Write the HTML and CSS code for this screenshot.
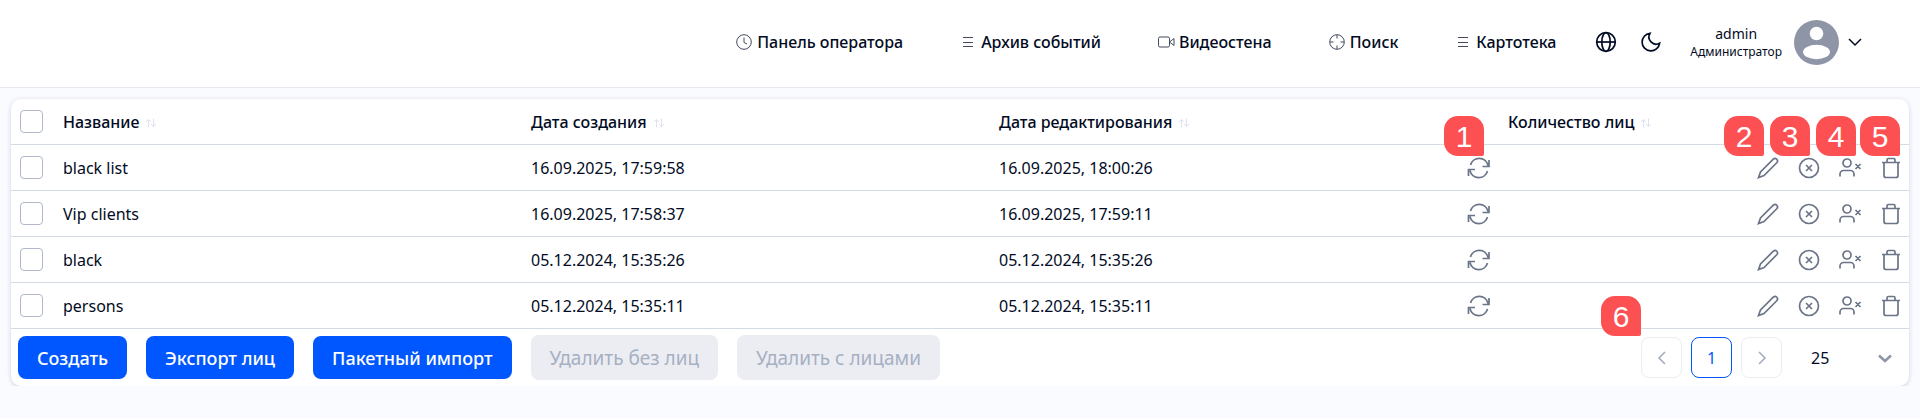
FILE: index.html
```html
<!DOCTYPE html>
<html lang="ru">
<head>
    <meta charset="UTF-8">
    <meta name="viewport" content="width=device-width, initial-scale=1.0">
    <title>Картотека</title>
    <link rel="stylesheet" href="styles.css">
</head>
<body>

    <!-- Shared icons -->
    <svg class="sprite" aria-hidden="true">
        <symbol id="i-list" viewBox="0 0 18 18"><path d="M4 4.500h10M4 9.500h10M4 13.500h10"/></symbol>
        <symbol id="i-sort" viewBox="0 0 12 10"><path d="M3.500 9.500v-8M1 4l2.500-2.500L6 4M8.500 .5v8M6 6l2.500 2.500L11 6"/></symbol>
        <symbol id="i-refresh" viewBox="0 0 24 24"><path d="M22 4v6.500h-6.500M1.500 20v-6.500H8M3.500 9A9 9 0 0 1 21 9.500M20.500 15A9 9 0 0 1 3 14.500"/></symbol>
        <symbol id="i-edit" viewBox="0 0 24 24"><path d="M17.500 3a2.500 2.500 0 0 1 3.500 3.500L8 19.500 2.500 21.500 4.500 16z"/></symbol>
        <symbol id="i-clear" viewBox="0 0 24 24"><circle cx="12" cy="12" r="9.500"/><path d="M9 9l6 6M15 9l-6 6"/></symbol>
        <symbol id="i-user" viewBox="0 0 24 24"><circle cx="9" cy="7" r="4"/><path d="M2 20.500V18a3.500 3.500 0 0 1 3.500-3.500h7A3.500 3.500 0 0 1 16 18v2.500M17.500 8l5 5M22.500 8l-5 5"/></symbol>
        <symbol id="i-trash" viewBox="0 0 24 24"><path d="M3 6.500h18M5 6.500v13a2 2 0 0 0 2 2h10a2 2 0 0 0 2-2v-13M8 6V4a1.500 1.500 0 0 1 1.500-1.500h5A1.500 1.500 0 0 1 16 4v2"/></symbol>
    </svg>

    <header class="topbar">
        <nav class="menu">
            <a href="#"><svg viewBox="0 0 18 18"><circle cx="9" cy="9" r="7.300"/><path d="M9 4.500V9.500l3 1.500"/></svg>Панель оператора</a>
            <a href="#"><svg><use href="#i-list"/></svg>Архив событий</a>
            <a href="#"><svg viewBox="0 0 18 18"><rect x="1.500" y="4" width="11" height="10" rx="1.500"/><path d="M12.500 9l4.500-3.500v7z"/></svg>Видеостена</a>
            <a href="#"><svg viewBox="0 0 18 18"><circle cx="9" cy="9" r="7.300"/><path d="M9 2v3.500M9 12.500V16M2 9h3.500M12.500 9H16"/></svg>Поиск</a>
            <a href="#"><svg><use href="#i-list"/></svg>Картотека</a>
        </nav>
        <div class="tools">
            <button type="button" aria-label="Язык"><svg viewBox="0 0 24 24"><circle cx="12" cy="12" r="9.300"/><ellipse cx="12" cy="12" rx="4.200" ry="9.300"/><path d="M2.700 12h18.600"/></svg></button>
            <button type="button" aria-label="Тема"><svg viewBox="0 0 24 24"><path d="M11 3.300A8.800 8.800 0 1 0 20.600 13.300A7.200 7.200 0 0 1 11 3.300z"/></svg></button>
        </div>
        <div class="profile">
            <div class="who">
                <span class="login">admin</span>
                <span class="role">Администратор</span>
            </div>
            <svg class="avatar" viewBox="0 0 45 45"><circle cx="22.500" cy="22.500" r="22.500" fill="#8e95a7"/><circle cx="22.500" cy="13.500" r="6.800" fill="#fff"/><ellipse cx="22.500" cy="32" rx="13.500" ry="7.200" fill="#fff"/></svg>
            <button type="button" aria-label="Профиль"><svg class="chevron" viewBox="0 0 14 14"><path d="M1 4l6 6 6-6"/></svg></button>
        </div>
    </header>

    <main class="card">
        <table class="lists">
            <colgroup>
                <col class="col-check"><col><col><col><col class="col-sync"><col class="col-count"><col class="col-actions">
            </colgroup>
            <thead>
                <tr>
                    <th><input type="checkbox" aria-label="Выбрать все"></th>
                    <th>Название<svg class="sort"><use href="#i-sort"/></svg></th>
                    <th>Дата создания<svg class="sort"><use href="#i-sort"/></svg></th>
                    <th>Дата редактирования<svg class="sort"><use href="#i-sort"/></svg></th>
                    <th></th>
                    <th>Количество лиц<svg class="sort"><use href="#i-sort"/></svg></th>
                    <th></th>
                </tr>
            </thead>
            <tbody>
                <tr>
                    <td><input type="checkbox" aria-label="black list"></td>
                    <td>black list</td>
                    <td>16.09.2025, 17:59:58</td>
                    <td>16.09.2025, 18:00:26</td>
                    <td><button type="button" class="icon" aria-label="Обновить"><svg><use href="#i-refresh"/></svg><span class="mark mark-sync">1</span></button></td>
                    <td></td>
                    <td>
                        <div class="actions">
                            <button type="button" class="icon" aria-label="Изменить"><svg><use href="#i-edit"/></svg><span class="mark mark-edit">2</span></button>
                            <button type="button" class="icon" aria-label="Очистить"><svg><use href="#i-clear"/></svg><span class="mark mark-clear">3</span></button>
                            <button type="button" class="icon" aria-label="Удалить с лицами"><svg><use href="#i-user"/></svg><span class="mark mark-user">4</span></button>
                            <button type="button" class="icon" aria-label="Удалить"><svg><use href="#i-trash"/></svg><span class="mark mark-trash">5</span></button>
                        </div>
                    </td>
                </tr>
                <tr>
                    <td><input type="checkbox" aria-label="Vip clients"></td>
                    <td>Vip clients</td>
                    <td>16.09.2025, 17:58:37</td>
                    <td>16.09.2025, 17:59:11</td>
                    <td><button type="button" class="icon" aria-label="Обновить"><svg><use href="#i-refresh"/></svg></button></td>
                    <td></td>
                    <td>
                        <div class="actions">
                            <button type="button" class="icon" aria-label="Изменить"><svg><use href="#i-edit"/></svg></button>
                            <button type="button" class="icon" aria-label="Очистить"><svg><use href="#i-clear"/></svg></button>
                            <button type="button" class="icon" aria-label="Удалить с лицами"><svg><use href="#i-user"/></svg></button>
                            <button type="button" class="icon" aria-label="Удалить"><svg><use href="#i-trash"/></svg></button>
                        </div>
                    </td>
                </tr>
                <tr>
                    <td><input type="checkbox" aria-label="black"></td>
                    <td>black</td>
                    <td>05.12.2024, 15:35:26</td>
                    <td>05.12.2024, 15:35:26</td>
                    <td><button type="button" class="icon" aria-label="Обновить"><svg><use href="#i-refresh"/></svg></button></td>
                    <td></td>
                    <td>
                        <div class="actions">
                            <button type="button" class="icon" aria-label="Изменить"><svg><use href="#i-edit"/></svg></button>
                            <button type="button" class="icon" aria-label="Очистить"><svg><use href="#i-clear"/></svg></button>
                            <button type="button" class="icon" aria-label="Удалить с лицами"><svg><use href="#i-user"/></svg></button>
                            <button type="button" class="icon" aria-label="Удалить"><svg><use href="#i-trash"/></svg></button>
                        </div>
                    </td>
                </tr>
                <tr>
                    <td><input type="checkbox" aria-label="persons"></td>
                    <td>persons</td>
                    <td>05.12.2024, 15:35:11</td>
                    <td>05.12.2024, 15:35:11</td>
                    <td><button type="button" class="icon" aria-label="Обновить"><svg><use href="#i-refresh"/></svg></button></td>
                    <td></td>
                    <td>
                        <div class="actions">
                            <button type="button" class="icon" aria-label="Изменить"><svg><use href="#i-edit"/></svg></button>
                            <button type="button" class="icon" aria-label="Очистить"><svg><use href="#i-clear"/></svg></button>
                            <button type="button" class="icon" aria-label="Удалить с лицами"><svg><use href="#i-user"/></svg></button>
                            <button type="button" class="icon" aria-label="Удалить"><svg><use href="#i-trash"/></svg></button>
                        </div>
                    </td>
                </tr>
            </tbody>
        </table>

        <!-- Buttons and pagination -->
        <div class="bottom">
            <div class="buttons">
                <button type="button" class="btn">Создать</button>
                <button type="button" class="btn">Экспорт лиц</button>
                <button type="button" class="btn">Пакетный импорт</button>
                <button type="button" class="btn btn-off" disabled>Удалить без лиц</button>
                <button type="button" class="btn btn-off" disabled>Удалить с лицами</button>
            </div>
            <div class="pager">
                <button type="button" class="page" aria-label="Назад"><svg viewBox="0 0 14 14"><path d="M10 1L4 7l6 6"/></svg><span class="mark mark-pager">6</span></button>
                <button type="button" class="page current">1</button>
                <button type="button" class="page" aria-label="Вперёд"><svg viewBox="0 0 14 14"><path d="M4 1l6 6-6 6"/></svg></button>
                <div class="size">
                    <select aria-label="Строк на странице">
                        <option>25</option>
                        <option>50</option>
                        <option>100</option>
                    </select>
                    <svg viewBox="0 0 14 14"><path d="M1 4.500L7 10l6-5.500"/></svg>
                </div>
            </div>
        </div>
    </main>

</body>
</html>
```
FILE: styles.css
```css
* {
    box-sizing: border-box;
}

body {
    margin: 0;
    background-color: #fafbff;
    color: #020b24;
    font-family: "Noto Sans", sans-serif;
    font-size: 16px;
    line-height: 22px;
}

button,
select {
    font: inherit;
    color: inherit;
    background: none;
    border: none;
    padding: 0;
    cursor: pointer;
}

svg {
    display: block;
    flex: none;
    fill: none;
    stroke: currentColor;
}

.sprite {
    position: absolute;
    width: 0;
    height: 0;
}

/* Top bar */
.topbar {
    display: flex;
    justify-content: flex-end;
    align-items: center;
    height: 88px;
    padding: 0 58px 3px 0;
    background-color: #fff;
    border-bottom: 1px solid #e6e9f0;
}

.menu {
    display: flex;
    gap: 56px;
    font-weight: 500;
}

.menu a {
    display: flex;
    align-items: center;
    gap: 4px;
    color: inherit;
    text-decoration: none;
}

.menu svg {
    width: 18px;
    height: 18px;
    color: #434b60;
}

.tools {
    display: flex;
    gap: 21px;
    margin: 0 27px 0 38px;
}

.tools svg {
    width: 24px;
    height: 24px;
    stroke-width: 1.7;
}

.profile {
    display: flex;
    align-items: center;
}

.who {
    display: flex;
    flex-direction: column;
    align-items: center;
}

.login {
    font-size: 14px;
    line-height: 20px;
}

.role {
    font-size: 12px;
    line-height: 16px;
}

.avatar {
    width: 45px;
    height: 45px;
    margin: 0 9px 0 12px;
    stroke: none;
}

.chevron {
    width: 14px;
    height: 14px;
    stroke-width: 1.5;
}

/* Table */
.card {
    margin: 11px 11px 0;
    background-color: #fff;
    border-radius: 10px;
    box-shadow: 0 1px 4px rgba(40, 50, 120, 0.22);
}

.lists {
    width: 100%;
    table-layout: fixed;
    border-collapse: separate;
    border-spacing: 0;
}

.col-check {
    width: 52px;
}

.col-sync {
    width: 41px;
}

.col-count {
    width: 246px;
}

.col-actions {
    width: 155px;
}

.lists th,
.lists td {
    height: 46px;
    padding: 0;
    border-bottom: 1px solid #d5dbe5;
    text-align: left;
    font-weight: 400;
    white-space: nowrap;
}

.lists th {
    font-weight: 500;
}

.lists input {
    display: block;
    appearance: none;
    width: 23px;
    height: 23px;
    margin: 0 0 0 9px;
    background-color: #fff;
    border: 1px solid #b0b8c9;
    border-radius: 4px;
}

.sort {
    display: inline-block;
    width: 12px;
    height: 10px;
    margin-left: 6px;
    color: #dfe2ec;
}

.icon {
    position: relative;
    display: block;
    color: #6b7588;
}

.icon svg {
    width: 24px;
    height: 24px;
    stroke-width: 1.7;
}

.actions {
    display: flex;
    justify-content: flex-end;
    gap: 17px;
    padding-right: 6px;
}

/* Number marks over the controls */
.mark {
    position: absolute;
    bottom: 24px;
    z-index: 1;
    width: 40px;
    height: 40px;
    background-color: #fd5052;
    border-radius: 14px 14px 2px 14px;
    color: #fff;
    font-family: "Liberation Sans", sans-serif;
    font-size: 30px;
    line-height: 42px;
    text-align: center;
}

.mark-sync {
    right: 7px;
}

.mark-edit {
    right: 16px;
}

.mark-clear {
    right: 11px;
}

.mark-user {
    right: 6px;
}

.mark-trash {
    right: 3px;
}

.mark-pager {
    right: 40px;
    bottom: 41px;
}

/* Bottom row */
.bottom {
    display: flex;
    justify-content: space-between;
    align-items: center;
    padding: 6px 7px;
}

.buttons {
    display: flex;
    align-items: center;
    gap: 19px;
}

.btn {
    height: 43px;
    padding: 0 19px;
    background-color: #0057ff;
    border-radius: 8px;
    color: #fff;
    font-size: 18px;
    font-weight: 500;
}

.btn-off {
    height: 45px;
    background-color: #ecedf3;
    color: #a6b0c3;
    font-size: 19px;
    font-weight: 400;
    cursor: default;
}

.pager {
    display: flex;
    align-items: center;
    gap: 9px;
}

.page {
    position: relative;
    display: flex;
    justify-content: center;
    align-items: center;
    width: 41px;
    height: 41px;
    border: 1px solid #ecedf3;
    border-radius: 8px;
    color: #a6b0c3;
}

.page svg {
    width: 14px;
    height: 14px;
    stroke-width: 1.7;
}

.current {
    border-color: #0057ff;
    color: #0057ff;
}

.size {
    position: relative;
    display: flex;
    align-items: center;
    width: 111px;
}

.size select {
    appearance: none;
    width: 100%;
    height: 41px;
    padding-left: 20px;
}

.size svg {
    position: absolute;
    right: 10px;
    width: 14px;
    height: 14px;
    color: #8e95a7;
    stroke-width: 2.5;
    pointer-events: none;
}
```
